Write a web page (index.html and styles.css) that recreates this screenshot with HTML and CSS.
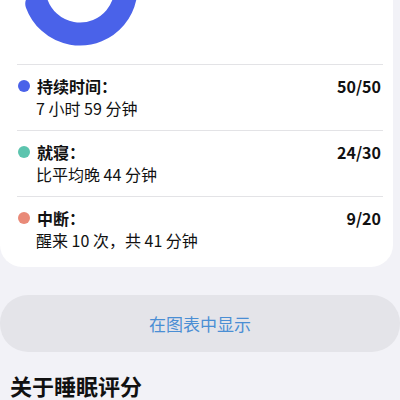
FILE: index.html
```html
<!DOCTYPE html>
<html lang="zh-CN">
<head>
  <meta charset="UTF-8" />
  <meta name="viewport" content="width=device-width, initial-scale=1.0"/>
  <title>睡眠评分</title>
  <link rel="stylesheet" href="styles.css">
</head>
<body>
  <div class="card">
    <div class="summary">
      <svg class="ring" width="140" height="64" viewBox="0 0 140 64">
        <path d="M36.77 3.73 A46 46 0 1 0 87.99 -57.3" fill="none" stroke="#4a62e9" stroke-width="23" stroke-linecap="round"/>
      </svg>
      <div class="score-text">良好</div>
    </div>

    <div class="row">
      <div class="row-head">
        <span class="dot dot-blue"></span>
        <span class="label">持续时间：</span>
        <span class="score">50/50</span>
      </div>
      <div class="detail">7 小时 59 分钟</div>
    </div>

    <div class="row">
      <div class="row-head">
        <span class="dot dot-teal"></span>
        <span class="label">就寝：</span>
        <span class="score">24/30</span>
      </div>
      <div class="detail">比平均晚 44 分钟</div>
    </div>

    <div class="row last">
      <div class="row-head">
        <span class="dot dot-salmon"></span>
        <span class="label">中断：</span>
        <span class="score">9/20</span>
      </div>
      <div class="detail">醒来 10 次，共 41 分钟</div>
    </div>
  </div>

  <button class="chart-btn">在图表中显示</button>

  <h2>关于睡眠评分</h2>
</body>
</html>
```

FILE: styles.css
```css
body {
  margin: 0;
  background: #f2f2f7;
  color: #111;
  font-family: "Noto Sans CJK SC", "Noto Sans", sans-serif;
}

.card {
  background: #fff;
  width: 393px;
  border-radius: 0 0 22px 22px;
}

.summary {
  display: flex;
  height: 64px;
  overflow: hidden;
}

.ring {
  flex-shrink: 0;
}

.score-text {
  margin: -17px 0 0 22px;
  font-size: 14px;
  line-height: 18px;
  color: #333;
}

.row {
  margin: 0 10px 0 17px;
  padding: 10px 0;
  border-top: 1px solid #e3e3e6;
}

.row.last {
  padding-bottom: 15px;
}

.row-head {
  display: flex;
  align-items: center;
  height: 22px;
}

.dot {
  width: 12px;
  height: 12px;
  border-radius: 50%;
  margin: 0 7px 0 1px;
}

.dot-blue { background: #4a62e9; }
.dot-teal { background: #5cc4ae; }
.dot-salmon { background: #e98a78; }

.label {
  font-size: 16px;
  font-weight: bold;
  flex: 1;
}

.score {
  font-size: 16px;
  font-weight: bold;
  margin-right: 2px;
}

.detail {
  font-size: 16px;
  line-height: 23px;
  padding-left: 19px;
}

.chart-btn {
  display: block;
  width: 400px;
  height: 57px;
  margin-top: 28px;
  border: none;
  border-radius: 28px;
  background: #e4e4e9;
  color: #4a8ed4;
  font-family: inherit;
  font-size: 17px;
}

h2 {
  margin: 18px 0 0 10px;
  font-size: 22px;
  line-height: 30px;
  font-weight: bold;
}
```
